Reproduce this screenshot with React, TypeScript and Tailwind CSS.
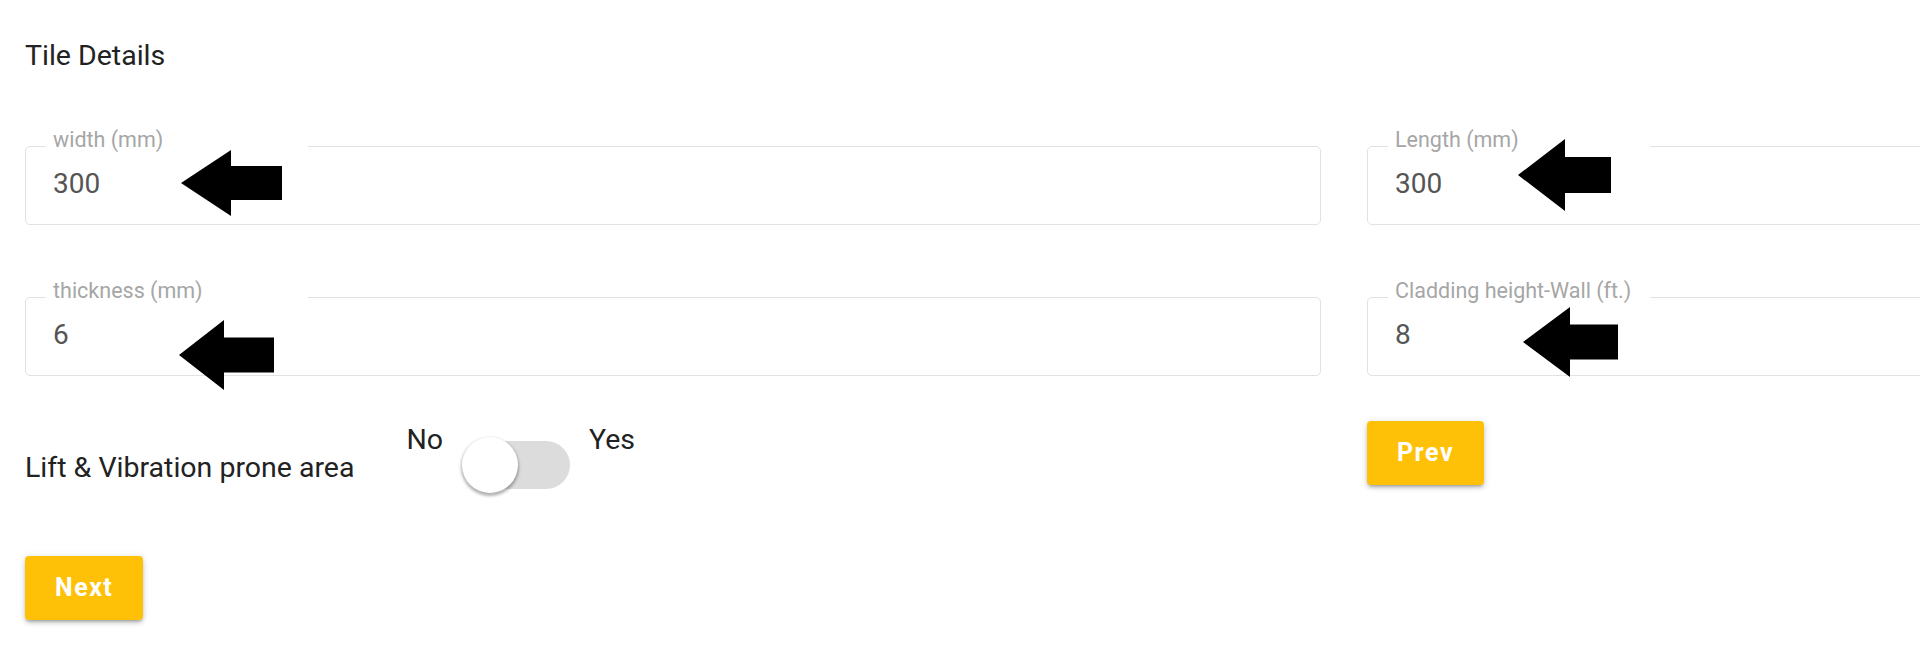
type ArrowProps = { w: number; h: number; head: number; shaft: number; className: string }

const Arrow = ({ w, h, head, shaft, className }: ArrowProps) => {
  const t = (h - shaft) / 2
  const b = (h + shaft) / 2
  return (
    <svg width={w} height={h} viewBox={`0 0 ${w} ${h}`} className={className}>
      <polygon points={`0,${h / 2} ${head},0 ${head},${t} ${w},${t} ${w},${b} ${head},${b} ${head},${h}`} fill="#000" />
    </svg>
  )
}

type FieldProps = { label: string; value: string; children?: React.ReactNode }

const Field = ({ label, value, children }: FieldProps) => {
  return (
    <div className="relative h-[79px] rounded-[5px] border border-[#e2e2e2] bg-white">
      <div className="absolute top-[-1px] left-[20px] h-[2px] w-[262px] bg-white" />
      <span className="absolute top-[-20px] left-[27px] text-[21.5px] leading-[26px] text-[#a6a6a6] whitespace-nowrap">
        {label}
      </span>
      <div className="pl-[27px] pt-[21px] text-[28px] leading-[32px] text-[#555555]">{value}</div>
      {children}
    </div>
  )
}

const YellowButton = ({ text }: { text: string }) => (
  <button className="h-[64px] rounded-[4px] bg-[#ffc107] px-[30px] text-[25px] font-bold tracking-[1.5px] text-white shadow-[0_3px_3px_-2px_rgba(0,0,0,0.25),0_3px_4px_0_rgba(0,0,0,0.14),0_1px_8px_0_rgba(0,0,0,0.12)]">
    {text}
  </button>
)

const App = () => {
  return (
    <div className="h-screen w-screen overflow-hidden bg-white font-['Roboto',sans-serif]">
      <div className="w-[2700px] pl-[25px]">
        <div className="pt-[39px] text-[28.5px] leading-[34px] text-[#222222]">Tile Details</div>

        <div className="mt-[73px] grid grid-cols-[1296px_1296px] gap-x-[46px] gap-y-[72px]">
          <Field label="width (mm)" value="300">
            <Arrow w={101} h={66} head={50} shaft={34} className="absolute left-[155px] top-[3px]" />
          </Field>
          <Field label="Length (mm)" value="300">
            <Arrow w={93} h={72} head={47} shaft={36} className="absolute left-[150px] top-[-8px]" />
          </Field>
          <Field label="thickness (mm)" value="6">
            <Arrow w={95} h={70} head={45} shaft={35} className="absolute left-[153px] top-[22px]" />
          </Field>
          <Field label="Cladding height-Wall (ft.)" value="8">
            <Arrow w={95} h={70} head={47} shaft={35} className="absolute left-[155px] top-[9px]" />
          </Field>
        </div>

        <div className="mt-[45px] grid grid-cols-[1296px_1296px] gap-x-[46px]">
          <div className="flex items-start">
            <span className="mt-[30px] text-[28.5px] leading-[33px] text-[#222222] whitespace-nowrap">
              Lift &amp; Vibration prone area
            </span>
            <span className="ml-[52px] mt-[2px] text-[28.5px] leading-[33px] text-[#222222]">No</span>
            <div className="relative ml-[19px] mt-[16px] h-[56px] w-[108px]">
              <div className="absolute left-[22px] right-0 top-[4px] h-[48px] rounded-full bg-[#dcdcdc]" />
              <div className="absolute left-0 top-0 h-[56px] w-[56px] rounded-full bg-white shadow-[0_2px_3px_1px_rgba(0,0,0,0.3)]" />
            </div>
            <span className="ml-[19px] mt-[2px] text-[28.5px] leading-[33px] text-[#222222]">Yes</span>
          </div>
          <div>
            <YellowButton text="Prev" />
          </div>
        </div>

        <div className="mt-[63px]">
          <YellowButton text="Next" />
        </div>
      </div>
    </div>
  )
}

export default App
